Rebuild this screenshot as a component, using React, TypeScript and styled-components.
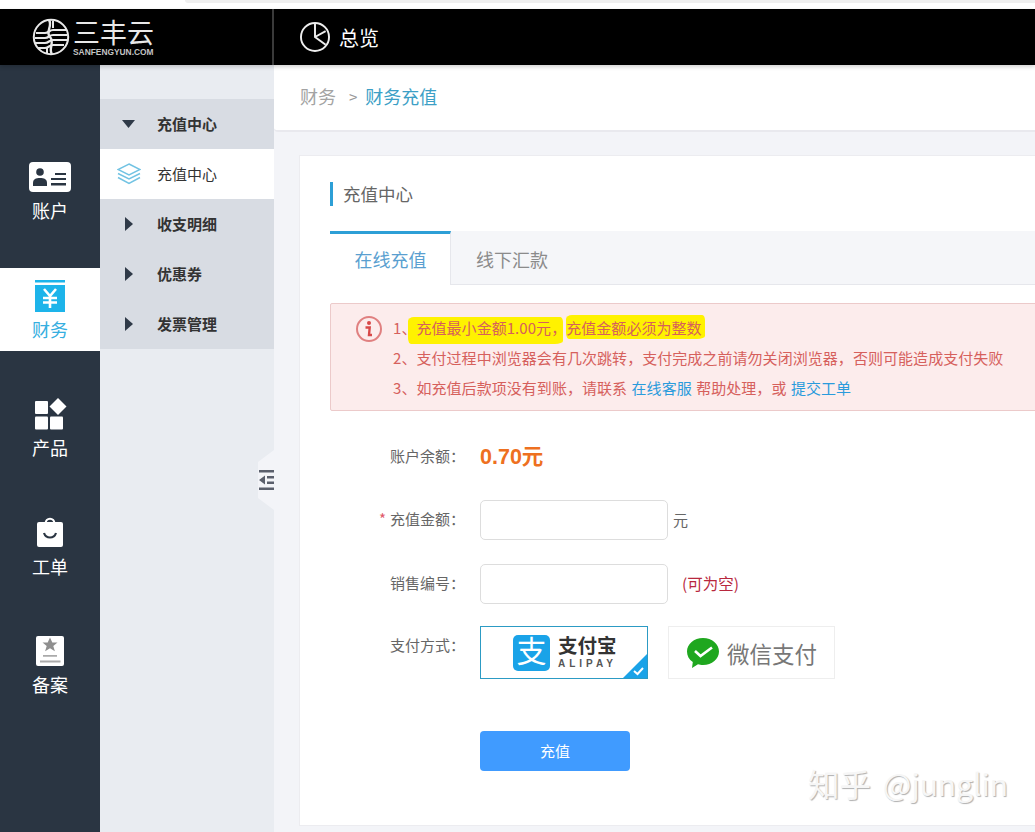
import React from "react";
import styled, { createGlobalStyle } from "styled-components";

const Global = createGlobalStyle`
  html, body { margin: 0; padding: 0; background: #fff; }
  body { font-family: "Noto Sans CJK SC", "Liberation Sans", sans-serif; }
  * { box-sizing: border-box; }
`;

const Page = styled.div`
  width: 1035px; height: 832px; overflow: hidden; position: relative;
  display: flex; flex-direction: column; background: #f3f4f8;
`;
const TopStrip = styled.div`
  height: 9px; flex: none; background: #fff; padding-left: 185px;
`;
const StripBar = styled.div`
  height: 3px; background: #efefef; border-radius: 0 0 0 6px;
`;
const Header = styled.header`
  height: 56px; flex: none; background: #000; display: flex; align-items: stretch;
  box-shadow: 0 2px 4px rgba(0,0,0,.18); position: relative; z-index: 2;
`;
const Brand = styled.div`
  width: 274px; flex: none; display: flex; align-items: center; padding-left: 32px; gap: 3px;
  border-right: 2px solid #3a3a3a;
`;
const BrandText = styled.div`
  display: flex; flex-direction: column; width: 84px; color: #e8e8e8;
`;
const BrandName = styled.span`
  font-family: "Liberation Sans", "Noto Sans CJK SC", sans-serif;
  font-size: 27px; line-height: 27px; margin-top: 3px; white-space: nowrap;
`;
const BrandSub = styled.span`
  font-family: "Liberation Sans", sans-serif; font-size: 8.400px; line-height: 9px; font-weight: 700;
  color: #c4c4c4; white-space: nowrap;
`;
const HeaderTitle = styled.div`
  display: flex; align-items: center; padding-left: 26px; gap: 9px; color: #fff; font-size: 20px;
`;
const Body = styled.div`
  flex: 1; display: flex; min-height: 0; position: relative;
`;
const Rail = styled.nav`
  width: 100px; flex: none; background: #2a3542; padding-top: 84px;
  display: flex; flex-direction: column; gap: 35.5px;
`;
const RailItem = styled.div<{ $active?: boolean }>`
  height: 83px; display: flex; flex-direction: column; align-items: center; padding-top: 12px;
  background: ${p => (p.$active ? "#fff" : "transparent")};
  color: ${p => (p.$active ? "#35aee0" : "#fff")};
  font-size: 18px; line-height: 26px;
`;
const RailIcon = styled.svg`
  width: 44px; height: 32px; display: block; margin-bottom: 4px;
`;
const SubNav = styled.aside`
  width: 174px; flex: none; background: #e9ecf1; padding-top: 34px; position: relative;
`;
const SubRow = styled.div<{ $leaf?: boolean }>`
  height: 50px; display: flex; align-items: center; font-size: 15px;
  background: ${p => (p.$leaf ? "#fff" : "#d8dce3")};
  color: #333; font-weight: ${p => (p.$leaf ? 400 : 700)};
`;
const SubIconSlot = styled.span`
  width: 57px; flex: none; display: flex; justify-content: center; padding-left: 0;
`;
const SubLabel = styled.span`
  margin-bottom: 2px;
`;
const Collapse = styled.div`
  position: absolute; right: 0; top: 385px; width: 16px; height: 60px; background: #f3f4f8;
  clip-path: polygon(100% 0, 100% 100%, 0 80%, 0 20%);
  display: flex; align-items: center; justify-content: flex-end;
`;
const Main = styled.main`
  flex: 1; min-width: 0; display: flex; flex-direction: column;
`;
const Crumbs = styled.div`
  height: 67px; flex: none; background: #fff; border-bottom: 2px solid #e9e9ee; border-radius: 0 0 0 4px;
  display: flex; align-items: center; padding: 0 0 3px 26px; font-size: 18px; color: #a3a3a3;
`;
const CrumbSep = styled.span`
  margin: 0 8px 0 13px; font-size: 15px; color: #999;
`;
const CrumbNow = styled.span`
  color: #3c9fc6;
`;
const Card = styled.section`
  margin: 23px 0 0 25px; width: 860px; height: 671px; flex: none; background: #fff;
  border: 1px solid #ececf0; padding: 26px 30px 0;
`;
const CardTitle = styled.h2`
  margin: 0; height: 24px; font-size: 17.500px; line-height: 24px; font-weight: 400; color: #666;
  border-left: 3px solid #2d9fd6; padding-left: 10px;
`;
const Tabs = styled.div`
  margin-top: 25px; height: 54px; display: flex; background: #f5f6f9;
  border-bottom: 1px solid #e6e7ec; font-size: 18px;
`;
const Tab = styled.div<{ $active?: boolean }>`
  width: 121px; text-align: center; line-height: 51px; padding-left: 1px;
  margin-bottom: ${p => (p.$active ? "-1px" : "0")};
  background: ${p => (p.$active ? "#fff" : "transparent")};
  border-top: 3px solid ${p => (p.$active ? "#2d9fd6" : "transparent")};
  border-right: ${p => (p.$active ? "1px solid #e6e7ec" : "none")};
  color: ${p => (p.$active ? "#5a9fd0" : "#8b8b8b")};
`;
const Alert = styled.div`
  margin-top: 18px; height: 108px; background: #fcecec; border: 1px solid #eccaca; border-radius: 2px;
  display: flex; padding: 9px 0 0 24px; gap: 10px; color: #d6605c; font-size: 15px; line-height: 30px;
  word-spacing: 1px; letter-spacing: 0.05px;
`;
const AlertIcon = styled.svg`
  width: 28px; height: 28px; flex: none; margin-top: 2px;
`;
const AlertLines = styled.div`
  display: flex; flex-direction: column; white-space: nowrap; isolation: isolate;
`;
const Mark = styled.span<{ $top: number; $bottom: number; $left: number; $right: number }>`
  position: relative;
  &::before {
    content: ""; position: absolute; z-index: -1;
    left: ${p => p.$left}px; right: ${p => p.$right}px;
    top: ${p => p.$top}px; bottom: ${p => p.$bottom}px; background: #fff200;
    border-radius: 6px 3px 8px 3px / 4px 5px 3px 6px;
  }
`;
const Link = styled.span`
  color: #2a9bdc;
`;
const Form = styled.div`
  display: flex; flex-direction: column; padding-top: 26px;
`;
const Row = styled.div<{ $h: number; $mt: number }>`
  display: flex; align-items: center; height: ${p => p.$h}px; margin-top: ${p => p.$mt}px;
`;
const Label = styled.label`
  width: 135px; text-align: right; font-size: 15px; color: #666; margin-right: 15px; margin-bottom: 4px; white-space: nowrap;
`;
const Star = styled.span`
  color: #e0596a; margin-right: 4px;
`;
const Balance = styled.span`
  font-size: 21.500px; font-weight: 700; color: #ee7020; margin-bottom: 6px;
  font-family: "Liberation Sans", "Noto Sans CJK SC", sans-serif;
`;
const Input = styled.input`
  width: 188px; height: 40px; border: 1px solid #ddd; border-radius: 5px; background: #fff; outline: none;
`;
const Unit = styled.span`
  margin-left: 5px; margin-bottom: 2px; font-size: 15px; color: #666;
`;
const Hint = styled.span`
  margin-left: 14px; margin-bottom: 2px; font-size: 15.500px; color: #b8283e;
`;
const PayBox = styled.div<{ $active?: boolean }>`
  width: ${p => (p.$active ? "168px" : "167px")}; height: 53px; position: relative; overflow: hidden;
  display: flex; align-items: center; background: #fff;
  border: 1px solid ${p => (p.$active ? "#2c9bc4" : "#eee")};
`;
const PayRow = styled(Row)`
  align-items: flex-start;
  gap: 20px;
  & > label { margin-right: -5px; padding-top: 8px; margin-bottom: 0; }
`;
const AliBadge = styled.span`
  width: 37px; height: 36px; margin-left: 32px; background: #1aa3e8; border-radius: 5px; flex: none;
  color: #fff; font-size: 30px; line-height: 33px; text-align: center;
  font-family: "Liberation Sans", "Noto Sans CJK SC", sans-serif;
`;
const AliText = styled.span`
  display: flex; flex-direction: column; margin-left: 8px; color: #333; gap: 3px;
`;
const AliName = styled.span`
  font-family: "Liberation Sans", "Noto Sans CJK SC", sans-serif;
  font-size: 19.500px; line-height: 20px; font-weight: 700; white-space: nowrap;
`;
const AliSub = styled.span`
  font-family: "Liberation Sans", sans-serif; font-size: 10px; line-height: 10px; letter-spacing: 4px; font-weight: 700; color: #555; white-space: nowrap;
`;
const Tick = styled.svg`
  position: absolute; right: 0; bottom: 0; width: 24px; height: 24px;
`;
const WeChatLogo = styled.svg`
  width: 34px; height: 32px; margin-left: 17px; flex: none;
`;
const WeChatText = styled.span`
  font-size: 22.500px; color: #777; margin-left: 7px; white-space: nowrap;
`;
const Submit = styled.button`
  width: 150px; height: 40px; margin-left: 150px; margin-top: 52px; background: #409bff; border: none; border-radius: 4px;
  color: #fff; font-size: 15px; font-family: inherit; padding: 0 0 2px;
`;
const Watermark = styled.div`
  position: absolute; left: 808px; top: 761px; font-size: 31.500px; line-height: 44px; color: #f6f6f6;
  text-shadow: 1px 1px 1px #b0b0b0; white-space: nowrap; display: flex; gap: 12px;
`;
const WatermarkLatin = styled.span`
  font-size: 30px;
`;

const Right = () => (
  <svg width="8" height="14" viewBox="0 0 8 14"><path d="M0 0l8 7-8 7z" fill="#2f3a48" /></svg>
);
const Down = () => (
  <svg width="13" height="8" viewBox="0 0 13 8"><path d="M0 0h13L6.500 8z" fill="#2f3a48" /></svg>
);

export default function App() {
  return (
    <Page>
      <Global />
      <TopStrip><StripBar /></TopStrip>
      <Header>
        <Brand>
          <svg width="38" height="38" viewBox="0 0 38 38" fill="none" stroke="#e8e8e8">
            <circle cx="19" cy="19" r="17.200" strokeWidth="2" />
            <path d="M4 15h9c4 0 4-3 8-3h13M3 20h10c4 0 4-3 8-3h14M3 25h10c4 0 4-3 8-3h14M6 30h7c4 0 4-3 8-3h11" strokeWidth="2.200" />
            <path d="M17 2c4 6-4 12 1 17s-2 12 2 17" strokeWidth="2.400" />
            <path d="M21 3v7M15 29v6" strokeWidth="2" />
          </svg>
          <BrandText>
            <BrandName>三丰云</BrandName>
            <BrandSub>SANFENGYUN.COM</BrandSub>
          </BrandText>
        </Brand>
        <HeaderTitle>
          <svg width="30" height="30" viewBox="0 0 31 31" fill="none" stroke="#eee" strokeWidth="2">
            <circle cx="15.500" cy="15.500" r="14.500" />
            <path d="M15.500 1v14.500l11 8M15.500 15.500l11-6" strokeWidth="2" />
          </svg>
          <span>总览</span>
        </HeaderTitle>
      </Header>
      <Body>
        <Rail>
          <RailItem>
            <RailIcon viewBox="0 0 44 32">
              <rect x="1" y="1" width="42" height="30" rx="4" fill="#fff" />
              <circle cx="12" cy="11" r="3.800" fill="#2a3542" />
              <path d="M5 25v-3c0-4 3-5 7-5s7 1 7 5v3z" fill="#2a3542" />
              <path d="M27 12h11v2H27zM23 17h15v2H23zM23 22h15v2.500H23z" fill="#2a3542" />
            </RailIcon>
            账户
          </RailItem>
          <RailItem $active>
            <RailIcon viewBox="0 0 44 32">
              <rect x="7" y="0" width="30" height="2.500" fill="#1db4ea" />
              <rect x="7" y="5" width="30" height="27" fill="#1db4ea" />
              <path d="M16 9l6 7 6-7M15 18h14M15 22.500h14M22 16v12" stroke="#fff" strokeWidth="2.600" fill="none" />
            </RailIcon>
            财务
          </RailItem>
          <RailItem>
            <RailIcon viewBox="0 0 44 32">
              <rect x="7" y="3" width="13" height="13" rx="1" fill="#fff" />
              <path d="M30 0l8.500 8.500L30 17l-8.500-8.500z" fill="#fff" />
              <rect x="7" y="18.500" width="13" height="13" rx="1" fill="#fff" />
              <rect x="22" y="18.500" width="13" height="13" rx="1" fill="#fff" />
            </RailIcon>
            产品
          </RailItem>
          <RailItem>
            <RailIcon viewBox="0 0 44 32">
              <rect x="9" y="5" width="26" height="25" rx="2" fill="#fff" />
              <path d="M17.500 7c0-7 9-7 9 0" stroke="#fff" strokeWidth="2.200" fill="none" />
              <path d="M16 16c2 6 10 6 12 0" stroke="#2a3542" strokeWidth="2.200" fill="none" />
            </RailIcon>
            工单
          </RailItem>
          <RailItem>
            <RailIcon viewBox="0 0 44 32">
              <rect x="8" y="1" width="28" height="30" rx="2" fill="#fff" />
              <path d="M22 2.500l2.300 5h5.200l-4.200 3.400 1.600 5.400-4.900-3.100-4.900 3.100 1.600-5.400L14.500 7.500h5.200z" fill="#8f8f8f" />
              <path d="M15 20h14v1.800H15zM12 25.500h20.500v2H12z" fill="#aaa" />
            </RailIcon>
            备案
          </RailItem>
        </Rail>
        <SubNav>
          <SubRow><SubIconSlot><Down /></SubIconSlot><SubLabel>充值中心</SubLabel></SubRow>
          <SubRow $leaf>
            <SubIconSlot>
              <svg width="24" height="22" viewBox="0 0 24 22" fill="none" stroke="#72c3e3" strokeWidth="1.500">
                <path d="M12 1l11 5.500L12 12 1 6.500z" />
                <path d="M1 10.500L12 16l11-5.500M1 14.500L12 20.500l11-6" />
              </svg>
            </SubIconSlot>
            <SubLabel>充值中心</SubLabel>
          </SubRow>
          <SubRow><SubIconSlot><Right /></SubIconSlot><SubLabel>收支明细</SubLabel></SubRow>
          <SubRow><SubIconSlot><Right /></SubIconSlot><SubLabel>优惠券</SubLabel></SubRow>
          <SubRow><SubIconSlot><Right /></SubIconSlot><SubLabel>发票管理</SubLabel></SubRow>
          <Collapse>
            <svg width="15" height="20" viewBox="0 0 15 20" fill="#5a5f6c">
              <path d="M0 0h15v2.500H0zM0 17.500h15V20H0zM8 6h7v2.500H8zM8 11.500h7V14H8zM6 5.500v9L0 10z" />
            </svg>
          </Collapse>
        </SubNav>
        <Main>
          <Crumbs>
            财务<CrumbSep>&gt;</CrumbSep><CrumbNow>财务充值</CrumbNow>
          </Crumbs>
          <Card>
            <CardTitle>充值中心</CardTitle>
            <Tabs>
              <Tab $active>在线充值</Tab>
              <Tab>线下汇款</Tab>
            </Tabs>
            <Alert>
              <AlertIcon viewBox="0 0 28 28" fill="none">
                <circle cx="14" cy="14" r="12" stroke="#e08080" strokeWidth="2" />
                <circle cx="14" cy="8" r="2" fill="#d84848" />
                <path d="M10.500 12.500h4.200l-.7 7.500h3" stroke="#d84848" strokeWidth="2.400" />
              </AlertIcon>
              <AlertLines>
                <span>1、<Mark $top={0} $bottom={-6} $left={-8} $right={3}>充值最小金额1.00元，</Mark><Mark $top={-2} $bottom={-1} $left={0} $right={-3}>充值金额必须为整数</Mark></span>
                <span>2、支付过程中浏览器会有几次跳转，支付完成之前请勿关闭浏览器，否则可能造成支付失败</span>
                <span>3、如充值后款项没有到账，请联系 <Link>在线客服</Link> 帮助处理，或 <Link>提交工单</Link></span>
              </AlertLines>
            </Alert>
            <Form>
              <Row $h={40} $mt={0}>
                <Label>账户余额：</Label>
                <Balance>0.70元</Balance>
              </Row>
              <Row $h={40} $mt={23}>
                <Label><Star>*</Star>充值金额：</Label>
                <Input />
                <Unit>元</Unit>
              </Row>
              <Row $h={40} $mt={24}>
                <Label>销售编号：</Label>
                <Input />
                <Hint>(可为空)</Hint>
              </Row>
              <PayRow $h={53} $mt={22}>
                <Label>支付方式：</Label>
                <PayBox $active>
                  <AliBadge>支</AliBadge>
                  <AliText>
                    <AliName>支付宝</AliName>
                    <AliSub>ALIPAY</AliSub>
                  </AliText>
                  <Tick viewBox="0 0 24 24">
                    <path d="M24 0v24H0z" fill="#1aa3e8" />
                    <path d="M11 17l3.500 3 5.500-6" stroke="#fff" strokeWidth="2" fill="none" />
                  </Tick>
                </PayBox>
                <PayBox>
                  <WeChatLogo viewBox="0 0 34 32">
                    <path d="M17 1c9 0 16 6 16 13.500S26 28 17 28c-2 0-3.500-.2-5-.7L6 31l.8-6C3 22.500 1 18.800 1 14.500 1 7 8 1 17 1z" fill="#1fa71f" />
                    <path d="M9 14l5.500 5L26 10.500" stroke="#fff" strokeWidth="2.600" fill="none" />
                  </WeChatLogo>
                  <WeChatText>微信支付</WeChatText>
                </PayBox>
              </PayRow>
              <Submit>充值</Submit>
            </Form>
          </Card>
        </Main>
      </Body>
      <Watermark><span>知乎</span><WatermarkLatin>@junglin</WatermarkLatin></Watermark>
    </Page>
  );
}
